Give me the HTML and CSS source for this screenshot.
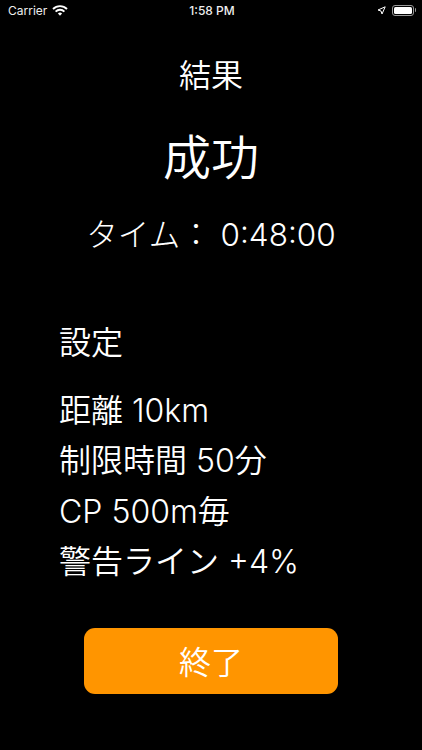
FILE: index.html
```html
<!DOCTYPE html>
<html lang="ja">
<head>
<meta charset="utf-8">
<title>結果</title>
<link rel="stylesheet" href="styles.css">
</head>
<body>
<div class="status">
  <div class="status-left">
    <span>Carrier</span>
    <svg class="wifi" width="16" height="11" viewBox="0 0 16 11" fill="none" stroke="#fff" stroke-width="1.9"><path d="M1 4a10 10 0 0 1 14 0"/><path d="M3.6 6.6a6.3 6.3 0 0 1 8.8 0"/><path d="M8 10.8 5.9 8.6a3 3 0 0 1 4.2 0z" fill="#fff" stroke="none"/></svg>
  </div>
  <div class="status-time">1:58 PM</div>
  <div class="status-right">
    <svg width="9" height="9" viewBox="0 0 9 9" fill="none" stroke="#fff" stroke-width="1" stroke-linejoin="round"><path d="M8.2.8 5 8 4 5 1 4z"/></svg>
    <div class="battery"><div class="battery-fill"></div></div>
    <div class="battery-nub"></div>
  </div>
</div>
<main class="content">
  <h1 class="title">結果</h1>
  <div class="outcome">成功</div>
  <div class="time">タイム： 0:48:00</div>
  <section class="settings">
    <div class="settings-head">設定</div>
    <ul class="list">
      <li>距離 10km</li>
      <li>制限時間 50分</li>
      <li>CP 500m毎</li>
      <li>警告ライン +4%</li>
    </ul>
  </section>
  <button class="finish">終了</button>
</main>
</body>
</html>
```
FILE: styles.css
```css
* { box-sizing: border-box; }
html, body { margin: 0; padding: 0; background: #000; }
body { width: 422px; height: 750px; overflow: hidden; color: #fff; font-family: Inter, "Liberation Sans", "Noto Sans CJK JP", sans-serif; font-weight: 350; }
.status { height: 24px; display: grid; grid-template-columns: 1fr auto 1fr; align-items: center; padding: 0 6px 4px 8px; font-size: 12px; font-weight: 400; color: #eee; }
.status-left { display: flex; align-items: center; gap: 5px; }
.status-time { font-weight: 500; }
.status-right { display: flex; justify-content: flex-end; align-items: center; }
.status-right svg { margin-right: 6px; }
.battery { width: 22px; height: 11px; border: 1px solid #999; border-radius: 3px; padding: 1px; }
.battery-fill { height: 100%; background: #fff; border-radius: 1.5px; }
.battery-nub { width: 1.5px; height: 4px; margin-left: 1px; background: #999; border-radius: 0 1px 1px 0; }
.content { display: flex; flex-direction: column; }
.title { margin: 30px 0 0; font-size: 32px; line-height: 44px; font-weight: inherit; text-align: center; }
.outcome { margin-top: 28px; font-size: 48px; line-height: 64px; text-align: center; font-weight: 330; }
.time { margin-top: 23px; font-size: 31.5px; line-height: 44px; text-align: center; font-weight: 320; }
.settings { margin-top: 64px; padding-left: 59px; font-size: 32px; }
.settings-head { line-height: 44px; }
.list { list-style: none; margin: 21px 0 0; padding: 0; }
.list li { line-height: 50.3px; }
.finish { align-self: center; margin-top: 41px; width: 254px; height: 66px; border: 0; border-radius: 11px; background: #ff9500; color: #fff; font: inherit; font-size: 32px; font-weight: 330; padding: 0 0 2px; }
```
